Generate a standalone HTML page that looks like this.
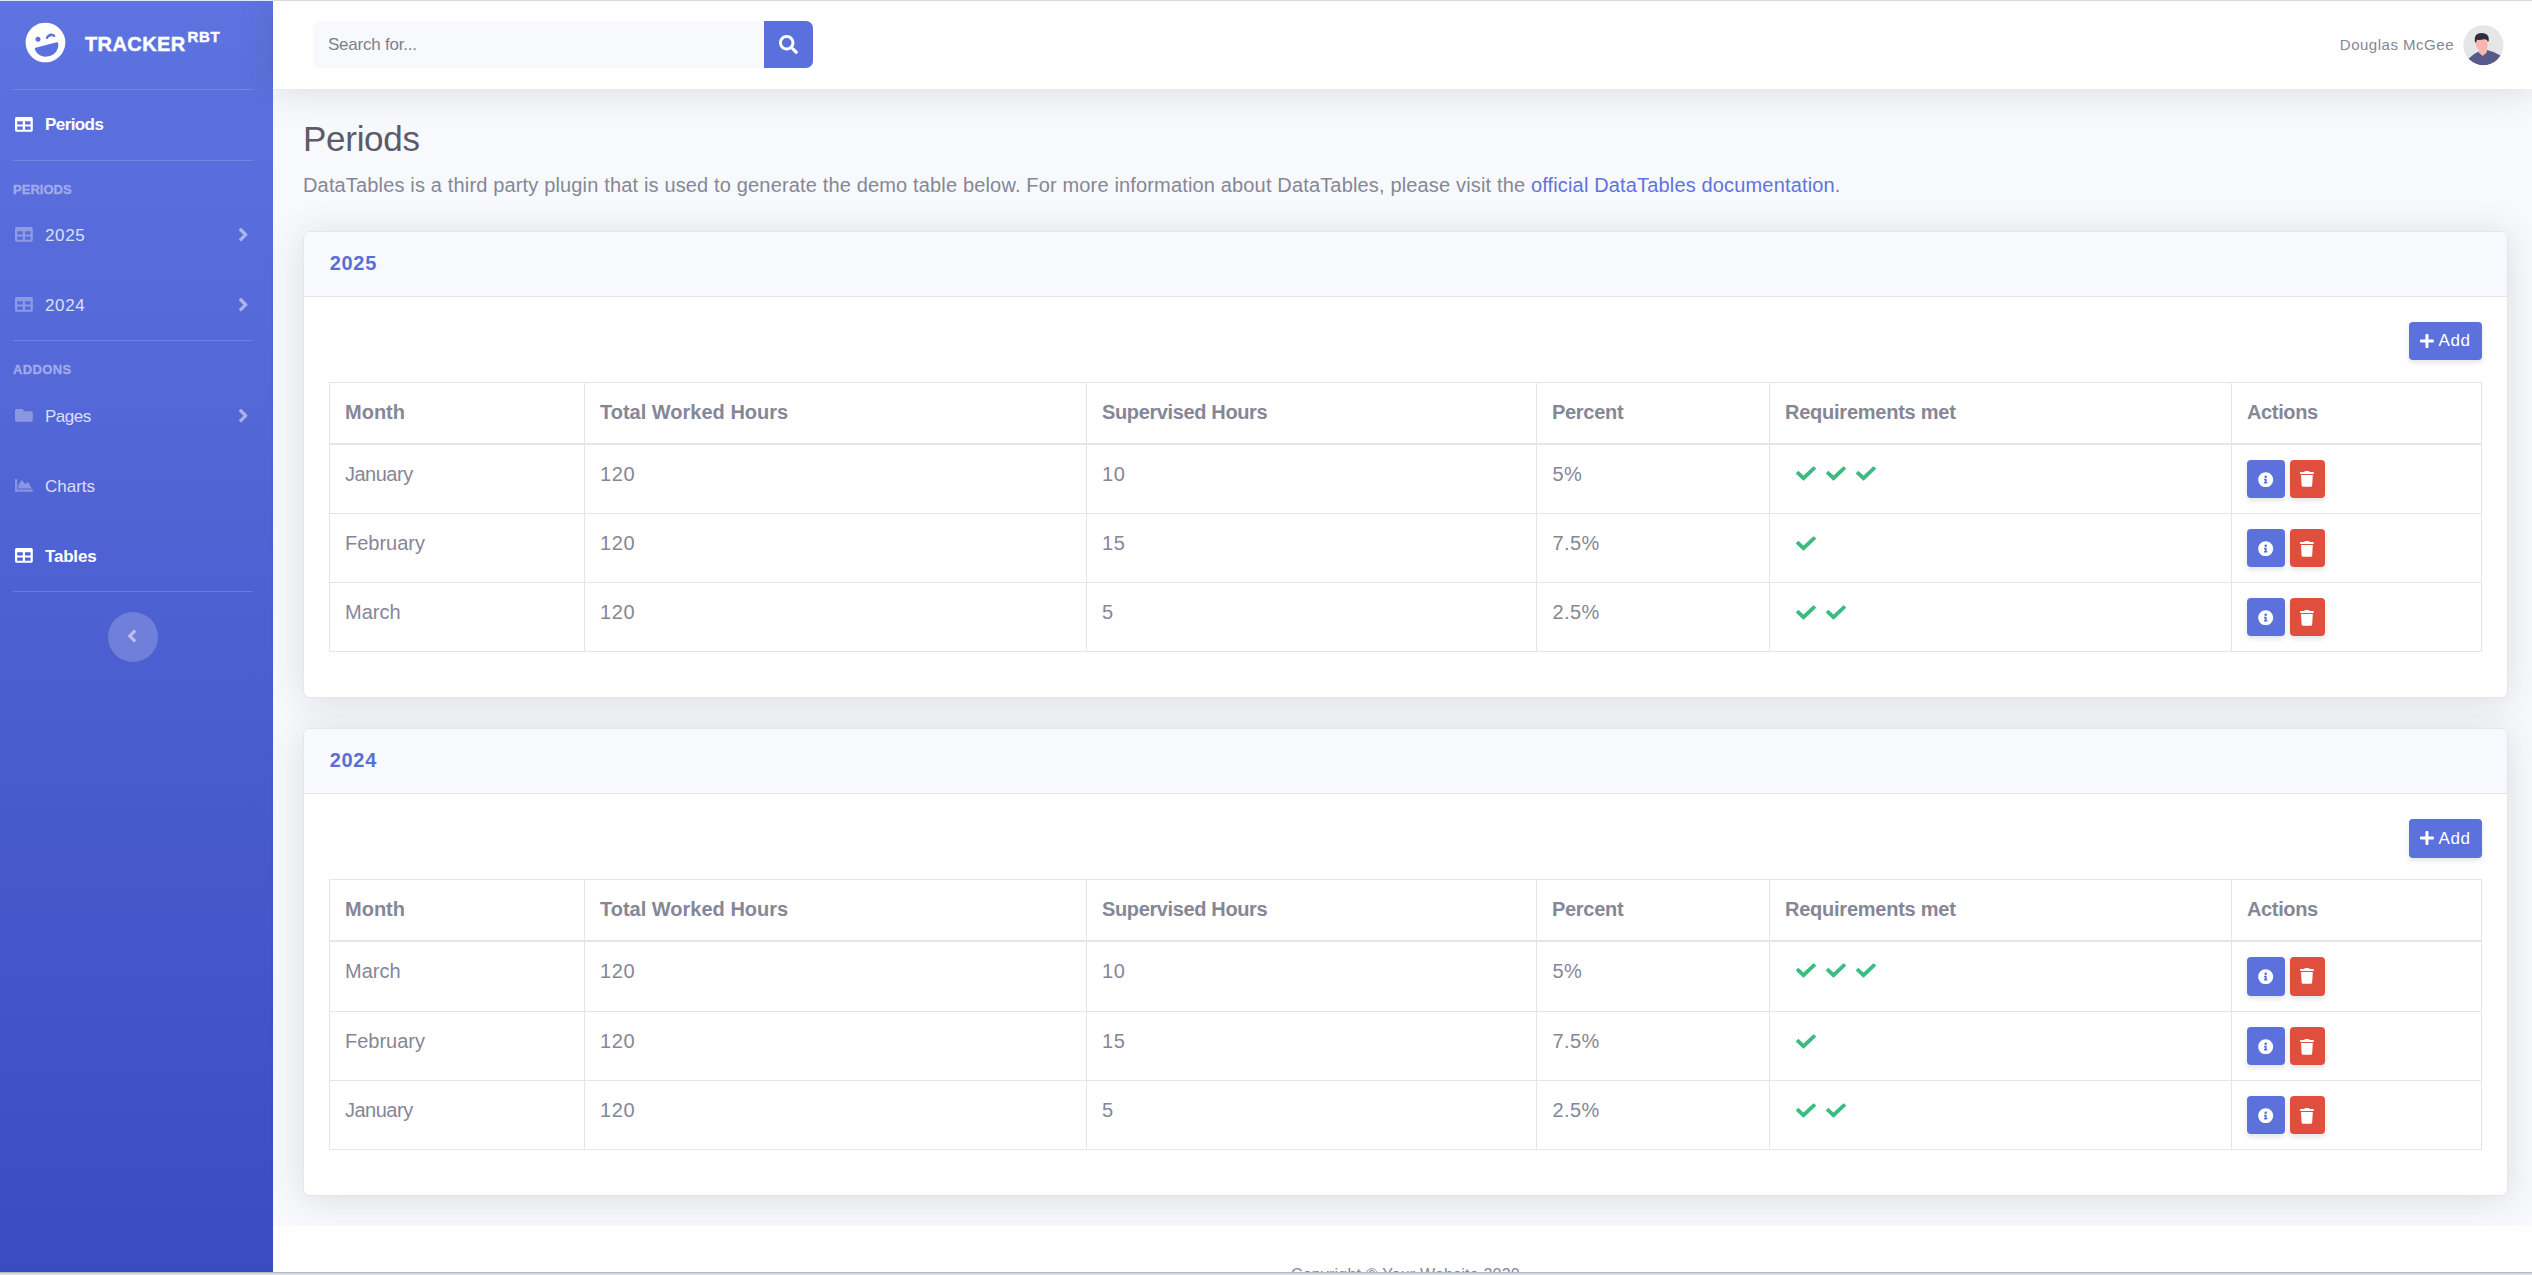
<!DOCTYPE html>
<html lang="en">
<head>
<meta charset="utf-8">
<title>Periods</title>
<style>
*{box-sizing:border-box;margin:0;padding:0}
html,body{width:2532px;height:1275px;overflow:hidden}
body{font-family:"Liberation Sans",sans-serif;background:#f8f9fc;color:#858796;position:relative;font-size:20px}
a{text-decoration:none}
#sidebar{position:absolute;left:0;top:0;width:273px;height:1275px;background:linear-gradient(180deg,#5d73df 0%,#5468d8 30%,#3a4bbf 100%)}
.brand{position:absolute;left:0;top:1px;width:273px;height:88px}
.brand svg{position:absolute;left:24.7px;top:21.2px;width:41px;height:41px;transform:rotate(-15deg)}
.brand .bt{position:absolute;left:85px;top:31px;font-size:20px;font-weight:bold;color:#fff;-webkit-text-stroke:.45px #fff;letter-spacing:0.4px;line-height:24px;white-space:nowrap}
.brand .bt sup{font-size:15px;position:relative;top:-9px;vertical-align:baseline;letter-spacing:0.6px;margin-left:2px}
.sdiv{position:absolute;left:13px;width:240px;height:1px;background:rgba(255,255,255,.17)}
.shead{position:absolute;left:13px;font-size:13px;font-weight:bold;color:#a1abeb;-webkit-text-stroke:.3px #a1abeb;letter-spacing:.03px;line-height:16px}
.sitem{position:absolute;left:0;width:273px;height:26px;color:rgba(255,255,255,.8);font-size:17px;line-height:26px}
.sitem.active{color:#fff;font-weight:bold}
.sitem svg.ic{position:absolute;left:15.1px;top:3.3px;width:17.8px;height:16.8px;fill:rgba(255,255,255,.32)}
.sitem.active svg.ic{fill:#fff}
.sitem span{position:absolute;left:45px;top:0;white-space:nowrap}
.sitem svg.ch{position:absolute;left:237.8px;top:0.9px;width:10.65px;height:21.3px;fill:rgba(255,255,255,.5)}
.toggler{position:absolute;left:108px;top:612px;width:50px;height:50px;border-radius:50%;background:rgba(255,255,255,.2)}
.toggler svg{position:absolute;left:18.6px;top:13.5px;width:10px;height:20px;fill:rgba(255,255,255,.5)}
#topbar{position:absolute;left:273px;top:1px;width:2259px;height:88px;background:#fff;box-shadow:0 3px 35px 0 rgba(58,59,69,.15)}
.search{position:absolute;left:40px;top:20px;width:451px;height:47px;background:#f8f9fc;border-radius:7px 0 0 7px;font-size:17px;line-height:47px;padding-left:15px;color:#7d7f8d;letter-spacing:-.22px}
.sbtn{position:absolute;left:491px;top:20px;width:49px;height:47px;background:#5a70dc;border-radius:0 7px 7px 0}
.sbtn svg{position:absolute;left:15px;top:13.7px;width:19px;height:19px;fill:#fff}
.uname{position:absolute;right:78px;top:32px;letter-spacing:.51px;font-size:15px;line-height:24px;color:#858796;white-space:nowrap}
.avatar{position:absolute;left:2190px;top:24px;transform:translate(.4px,.3px);width:40px;height:40px;border-radius:50%;overflow:hidden;background:#e6e6e6}
h1{position:absolute;left:303px;top:117px;letter-spacing:-.28px;font-size:35px;font-weight:normal;color:#5a5c69;line-height:44px;white-space:nowrap}
p.lead{position:absolute;left:303px;top:170px;letter-spacing:.157px;font-size:20px;line-height:30px;color:#858796;white-space:nowrap}
p.lead a{color:#5f73dc}
.card{position:absolute;left:303px;width:2205px;background:#fff;border:1px solid #e5e6ed;border-radius:7px;box-shadow:0 3px 35px 0 rgba(58,59,69,.15)}
.card .hd{position:absolute;left:0;top:0;width:2203px;height:65px;background:#f8f9fc;border-bottom:1px solid #e5e6ed;border-radius:6px 6px 0 0}
.card .hd b{position:absolute;left:25.7px;top:17.5px;font-size:20px;line-height:26px;color:#5a6fd6;letter-spacing:.72px}
.add{position:absolute;left:2105px;top:90px;width:73px;height:38px;background:#5b71dc;border-radius:4px;color:#fff;font-size:17px;line-height:38.6px;letter-spacing:.6px;box-shadow:0 2.500px 5px rgba(58,59,69,.13)}
.add svg{position:absolute;left:10.9px;top:11px;width:13.9px;height:15.9px;fill:#fff}
.add span{position:absolute;left:29.5px;top:0}
table{position:absolute;left:25px;top:150px;width:2152px;border-collapse:collapse;table-layout:fixed;font-size:20px;color:#858796}
th,td{border:1px solid #e5e6ed;text-align:left;vertical-align:top;padding:0 0 0 15px;white-space:nowrap}
th{height:61px;line-height:59px;font-weight:bold;border-bottom:2px solid #e5e6ed}
td{height:69px;line-height:58px}
td.n{letter-spacing:.57px}
td.p{letter-spacing:.4px;padding-left:15.5px}
tbody tr:first-child td{height:70px;padding-top:0}
.c2 tbody tr:first-child td{height:71px;padding-top:0}
.c2 tbody tr:first-child .btn{height:39px}
.c2 .add{height:39px;line-height:39.6px}
.btn{display:inline-block;width:38px;height:38px;border-radius:4px;vertical-align:top;margin-top:15px;position:relative;box-shadow:0 2.500px 5px rgba(58,59,69,.13)}
.bi{background:#5c71dc;margin-right:5px}
.bd{background:#e04f3e;width:35px}
.btn svg{position:absolute;fill:#fff}
.ck:first-child{margin-left:10.8px}
.ck{display:inline-block;width:20px;height:18.9px;margin:19.7px 0 0 10px;fill:#3cbb83;vertical-align:top}
#footer{position:absolute;left:273px;top:1226px;width:2259px;height:49px;background:#fff}
#footer div{position:absolute;left:0;top:39.2px;width:2259px;padding-left:5.8px;letter-spacing:.2px;text-align:center;font-size:16px;line-height:20px;color:#858796}
#topline{position:absolute;left:0;top:0;width:2532px;height:1px;background:linear-gradient(90deg,#dfe8fe 0,#dfe8fe 273px,#dbdbd9 273px)}
#botline{position:absolute;left:0;top:1272px;width:2532px;height:3px;background:#d6dce2;border-top:1px solid #b0b9c2}
</style>
</head>
<body>
<div id="sidebar">
<div class="brand"><svg viewBox="0 0 496 512"><path fill="#fff" d="M248 8C111 8 0 119 0 256s111 248 248 248 248-111 248-248S385 8 248 8zm20.100 198.100c4-25.200 34.200-42.100 59.900-42.100s55.900 16.900 59.900 42.100c1.700 11.100-11.400 18.300-19.800 10.800l-9.500-8.500c-14.800-13.200-46.200-13.200-61 0L288 217c-8.400 7.400-21.600.3-19.900-10.900zM168 160c17.700 0 32 14.300 32 32s-14.300 32-32 32-32-14.300-32-32 14.300-32 32-32zm230.900 146C390 377 329.400 432 256 432h-16c-73.400 0-134-55-142.900-126-1.200-9.500 6.300-18 15.900-18h270c9.600 0 17.100 8.400 15.900 18z"/></svg><div class="bt">TRACKER<sup>RBT</sup></div></div>
<div class="sdiv" style="top:89px"></div>
<div class="sitem active" style="top:113px"><svg class="ic" viewBox="0 0 512 512" preserveAspectRatio="none"><path d="M464 32H48C21.490 32 0 53.490 0 80v352c0 26.510 21.490 48 48 48h416c26.510 0 48-21.490 48-48V80c0-26.510-21.490-48-48-48zM224 416H64v-96h160v96zm0-160H64v-96h160v96zm224 160H288v-96h160v96zm0-160H288v-96h160v96z"/></svg><span style="font-size:17px;letter-spacing:-.58px;top:-.7px">Periods</span></div>
<div class="sdiv" style="top:160px"></div>
<div class="shead" style="top:182px">PERIODS</div>
<div class="sitem" style="top:223px"><svg class="ic" viewBox="0 0 512 512" preserveAspectRatio="none"><path d="M464 32H48C21.490 32 0 53.490 0 80v352c0 26.510 21.490 48 48 48h416c26.510 0 48-21.490 48-48V80c0-26.510-21.490-48-48-48zM224 416H64v-96h160v96zm0-160H64v-96h160v96zm224 160H288v-96h160v96zm0-160H288v-96h160v96z"/></svg><span style="letter-spacing:.65px">2025</span><svg class="ch" viewBox="0 0 256 512"><path d="M224.300 273l-136 136c-9.400 9.400-24.600 9.400-33.900 0l-22.600-22.600c-9.400-9.400-9.400-24.600 0-33.900l96.400-96.400-96.400-96.400c-9.400-9.400-9.400-24.600 0-33.900L54.300 103c9.400-9.400 24.600-9.400 33.900 0l136 136c9.500 9.400 9.500 24.600.1 34z"/></svg></div>
<div class="sitem" style="top:293px"><svg class="ic" viewBox="0 0 512 512" preserveAspectRatio="none"><path d="M464 32H48C21.490 32 0 53.490 0 80v352c0 26.510 21.490 48 48 48h416c26.510 0 48-21.490 48-48V80c0-26.510-21.490-48-48-48zM224 416H64v-96h160v96zm0-160H64v-96h160v96zm224 160H288v-96h160v96zm0-160H288v-96h160v96z"/></svg><span style="letter-spacing:.65px">2024</span><svg class="ch" viewBox="0 0 256 512"><path d="M224.300 273l-136 136c-9.400 9.400-24.600 9.400-33.900 0l-22.600-22.600c-9.400-9.400-9.400-24.600 0-33.900l96.400-96.400-96.400-96.400c-9.400-9.400-9.400-24.600 0-33.900L54.300 103c9.400-9.400 24.600-9.400 33.900 0l136 136c9.500 9.400 9.500 24.600.1 34z"/></svg></div>
<div class="sdiv" style="top:340px"></div>
<div class="shead" style="top:362px;letter-spacing:.35px">ADDONS</div>
<div class="sitem" style="top:404px"><svg class="ic" viewBox="0 0 512 512" preserveAspectRatio="none"><path d="M464 128H272l-64-64H48C21.490 64 0 85.490 0 112v288c0 26.510 21.490 48 48 48h416c26.510 0 48-21.490 48-48V176c0-26.510-21.490-48-48-48z"/></svg><span style="letter-spacing:-.5px">Pages</span><svg class="ch" viewBox="0 0 256 512"><path d="M224.300 273l-136 136c-9.400 9.400-24.600 9.400-33.900 0l-22.600-22.600c-9.400-9.400-9.400-24.600 0-33.900l96.400-96.400-96.400-96.400c-9.400-9.400-9.400-24.600 0-33.900L54.300 103c9.400-9.400 24.600-9.400 33.900 0l136 136c9.500 9.400 9.500 24.600.1 34z"/></svg></div>
<div class="sitem" style="top:474px"><svg class="ic" viewBox="0 0 512 512" preserveAspectRatio="none"><path d="M500 384c6.600 0 12 5.400 12 12v40c0 6.600-5.400 12-12 12H12c-6.600 0-12-5.400-12-12V76c0-6.600 5.400-12 12-12h40c6.600 0 12 5.400 12 12v308h436zM372.700 159.500L288 216l-85.300-113.700c-5.100-6.800-15.500-6.300-19.900 1L96 248v104h384l-89.900-187.800c-3.200-6.500-11.400-8.700-17.400-4.700z"/></svg><span>Charts</span></div>
<div class="sitem active" style="top:544px"><svg class="ic" viewBox="0 0 512 512" preserveAspectRatio="none"><path d="M464 32H48C21.490 32 0 53.490 0 80v352c0 26.510 21.490 48 48 48h416c26.510 0 48-21.490 48-48V80c0-26.510-21.490-48-48-48zM224 416H64v-96h160v96zm0-160H64v-96h160v96zm224 160H288v-96h160v96zm0-160H288v-96h160v96z"/></svg><span style="letter-spacing:-.2px">Tables</span></div>
<div class="sdiv" style="top:591px"></div>
<div class="toggler"><svg viewBox="0 0 256 512"><path d="M31.700 239l136-136c9.400-9.400 24.600-9.400 33.900 0l22.600 22.600c9.400 9.400 9.400 24.600 0 33.900L127.900 256l96.400 96.400c9.400 9.400 9.400 24.600 0 33.900L201.700 409c-9.400 9.400-24.600 9.400-33.900 0l-136-136c-9.500-9.400-9.500-24.600-.1-34z"/></svg></div>
</div>
<div id="topbar">
<div class="search">Search for...</div>
<div class="sbtn"><svg viewBox="0 0 512 512"><path d="M505 442.700L405.300 343c-4.500-4.500-10.600-7-17-7H372c27.600-35.300 44-79.700 44-128C416 93.100 322.900 0 208 0S0 93.100 0 208s93.100 208 208 208c48.300 0 92.700-16.400 128-44v16.300c0 6.400 2.500 12.500 7 17l99.700 99.700c9.400 9.400 24.600 9.400 33.900 0l28.300-28.300c9.400-9.400 9.400-24.600.1-34zM208 336c-70.700 0-128-57.200-128-128 0-70.700 57.200-128 128-128 70.700 0 128 57.200 128 128 0 70.700-57.200 128-128 128z"/></svg></div>
<div class="uname">Douglas McGee</div>
<div class="avatar"><svg viewBox="0 0 40 40" width="40" height="40"><defs><clipPath id="avc"><circle cx="20" cy="20" r="20"/></clipPath></defs><circle cx="20" cy="20" r="20" fill="#e5e6e7"/><g clip-path="url(#avc)"><path d="M5 33.500 Q9.500 28.500 15.400 26.200 L19.400 30.800 L23.600 24.800 Q31 26.300 37.500 30.500 L40 45 L0 45z" fill="#575a8b"/><path d="M12.400 18.500 Q12.400 13.500 18.500 13.500 Q24.300 13.500 24.300 19 Q24.300 22.500 23.300 24.500 L23.500 27 Q19.500 32 15.400 27.500 L15.700 24.800 Q12.400 22.500 12.400 18.500z" fill="#f9b6b0"/><path d="M11.400 16.800 Q10 7.600 18.300 7.600 Q25.600 7.600 25.400 14.300 Q25.400 16 24.600 16.600 Q24 13.800 21 14 Q16 14.800 14 14.500 Q12.600 15.800 12.700 17.500z" fill="#2f2e41"/></g></svg></div>
</div>
<h1>Periods</h1>
<p class="lead">DataTables is a third party plugin that is used to generate the demo table below. For more information about DataTables, please visit the <a>official DataTables documentation</a>.</p>
<div class="card" style="top:231px;height:467px">
<div class="hd"><b>2025</b></div>
<div class="add"><svg viewBox="0 0 448 512"><path d="M416 208H272V64c0-17.670-14.330-32-32-32h-32c-17.670 0-32 14.330-32 32v144H32c-17.670 0-32 14.330-32 32v32c0 17.670 14.330 32 32 32h144v144c0 17.670 14.330 32 32 32h32c17.670 0 32-14.330 32-32V304h144c17.670 0 32-14.330 32-32v-32c0-17.670-14.330-32-32-32z"/></svg><span>Add</span></div>
<table><colgroup><col style="width:255px"><col style="width:502px"><col style="width:450px"><col style="width:233px"><col style="width:462px"><col style="width:250px"></colgroup>
<thead><tr><th>Month</th><th>Total Worked Hours</th><th style="letter-spacing:-.37px">Supervised Hours</th><th style="letter-spacing:-.3px">Percent</th><th style="letter-spacing:-.24px">Requirements met</th><th style="letter-spacing:-.36px">Actions</th></tr></thead>
<tbody>
<tr><td style="letter-spacing:-.5px">January</td><td class="n">120</td><td class="n">10</td><td class="p">5%</td><td><svg class="ck" viewBox="0 0 512 512" preserveAspectRatio="none"><path d="M173.898 439.404l-166.400-166.400c-9.997-9.997-9.997-26.206 0-36.204l36.203-36.204c9.997-9.998 26.207-9.998 36.204 0L192 312.690 432.095 72.596c9.997-9.997 26.207-9.997 36.204 0l36.203 36.204c9.997 9.997 9.997 26.206 0 36.204l-294.400 294.401c-9.998 9.997-26.207 9.997-36.204-.001z"/></svg><svg class="ck" viewBox="0 0 512 512" preserveAspectRatio="none"><path d="M173.898 439.404l-166.400-166.400c-9.997-9.997-9.997-26.206 0-36.204l36.203-36.204c9.997-9.998 26.207-9.998 36.204 0L192 312.690 432.095 72.596c9.997-9.997 26.207-9.997 36.204 0l36.203 36.204c9.997 9.997 9.997 26.206 0 36.204l-294.400 294.401c-9.998 9.997-26.207 9.997-36.204-.001z"/></svg><svg class="ck" viewBox="0 0 512 512" preserveAspectRatio="none"><path d="M173.898 439.404l-166.400-166.400c-9.997-9.997-9.997-26.206 0-36.204l36.203-36.204c9.997-9.998 26.207-9.998 36.204 0L192 312.690 432.095 72.596c9.997-9.997 26.207-9.997 36.204 0l36.203 36.204c9.997 9.997 9.997 26.206 0 36.204l-294.400 294.401c-9.998 9.997-26.207 9.997-36.204-.001z"/></svg></td><td><span class="btn bi"><svg style="left:11.4px;top:12.1px;width:15.4px;height:15.4px" viewBox="0 0 512 512"><path d="M256 8C119.043 8 8 119.083 8 256c0 136.997 111.043 248 248 248s248-111.003 248-248C504 119.083 392.957 8 256 8zm0 110c23.196 0 42 18.804 42 42s-18.804 42-42 42-42-18.804-42-42 18.804-42 42-42zm56 254c0 6.627-5.373 12-12 12h-88c-6.627 0-12-5.373-12-12v-24c0-6.627 5.373-12 12-12h12v-64h-12c-6.627 0-12-5.373-12-12v-24c0-6.627 5.373-12 12-12h64c6.627 0 12 5.373 12 12v100h12c6.627 0 12 5.373 12 12v24z"/></svg></span><span class="btn bd"><svg style="left:10.2px;top:11.8px;width:13.8px;height:15.8px" viewBox="0 0 448 512"><path d="M432 32H312l-9.400-18.700A24 24 0 0 0 281.100 0H166.800a23.720 23.720 0 0 0-21.400 13.300L136 32H16A16 16 0 0 0 0 48v32a16 16 0 0 0 16 16h416a16 16 0 0 0 16-16V48a16 16 0 0 0-16-16zM53.200 467a48 48 0 0 0 47.900 45h245.800a48 48 0 0 0 47.900-45L416 128H32z"/></svg></span></td></tr>
<tr><td>February</td><td class="n">120</td><td class="n">15</td><td class="p">7.5%</td><td><svg class="ck" viewBox="0 0 512 512" preserveAspectRatio="none"><path d="M173.898 439.404l-166.400-166.400c-9.997-9.997-9.997-26.206 0-36.204l36.203-36.204c9.997-9.998 26.207-9.998 36.204 0L192 312.690 432.095 72.596c9.997-9.997 26.207-9.997 36.204 0l36.203 36.204c9.997 9.997 9.997 26.206 0 36.204l-294.400 294.401c-9.998 9.997-26.207 9.997-36.204-.001z"/></svg></td><td><span class="btn bi"><svg style="left:11.4px;top:12.1px;width:15.4px;height:15.4px" viewBox="0 0 512 512"><path d="M256 8C119.043 8 8 119.083 8 256c0 136.997 111.043 248 248 248s248-111.003 248-248C504 119.083 392.957 8 256 8zm0 110c23.196 0 42 18.804 42 42s-18.804 42-42 42-42-18.804-42-42 18.804-42 42-42zm56 254c0 6.627-5.373 12-12 12h-88c-6.627 0-12-5.373-12-12v-24c0-6.627 5.373-12 12-12h12v-64h-12c-6.627 0-12-5.373-12-12v-24c0-6.627 5.373-12 12-12h64c6.627 0 12 5.373 12 12v100h12c6.627 0 12 5.373 12 12v24z"/></svg></span><span class="btn bd"><svg style="left:10.2px;top:11.8px;width:13.8px;height:15.8px" viewBox="0 0 448 512"><path d="M432 32H312l-9.400-18.700A24 24 0 0 0 281.100 0H166.800a23.720 23.720 0 0 0-21.400 13.300L136 32H16A16 16 0 0 0 0 48v32a16 16 0 0 0 16 16h416a16 16 0 0 0 16-16V48a16 16 0 0 0-16-16zM53.200 467a48 48 0 0 0 47.900 45h245.800a48 48 0 0 0 47.900-45L416 128H32z"/></svg></span></td></tr>
<tr><td>March</td><td class="n">120</td><td class="n">5</td><td class="p">2.5%</td><td><svg class="ck" viewBox="0 0 512 512" preserveAspectRatio="none"><path d="M173.898 439.404l-166.400-166.400c-9.997-9.997-9.997-26.206 0-36.204l36.203-36.204c9.997-9.998 26.207-9.998 36.204 0L192 312.690 432.095 72.596c9.997-9.997 26.207-9.997 36.204 0l36.203 36.204c9.997 9.997 9.997 26.206 0 36.204l-294.400 294.401c-9.998 9.997-26.207 9.997-36.204-.001z"/></svg><svg class="ck" viewBox="0 0 512 512" preserveAspectRatio="none"><path d="M173.898 439.404l-166.400-166.400c-9.997-9.997-9.997-26.206 0-36.204l36.203-36.204c9.997-9.998 26.207-9.998 36.204 0L192 312.690 432.095 72.596c9.997-9.997 26.207-9.997 36.204 0l36.203 36.204c9.997 9.997 9.997 26.206 0 36.204l-294.400 294.401c-9.998 9.997-26.207 9.997-36.204-.001z"/></svg></td><td><span class="btn bi"><svg style="left:11.4px;top:12.1px;width:15.4px;height:15.4px" viewBox="0 0 512 512"><path d="M256 8C119.043 8 8 119.083 8 256c0 136.997 111.043 248 248 248s248-111.003 248-248C504 119.083 392.957 8 256 8zm0 110c23.196 0 42 18.804 42 42s-18.804 42-42 42-42-18.804-42-42 18.804-42 42-42zm56 254c0 6.627-5.373 12-12 12h-88c-6.627 0-12-5.373-12-12v-24c0-6.627 5.373-12 12-12h12v-64h-12c-6.627 0-12-5.373-12-12v-24c0-6.627 5.373-12 12-12h64c6.627 0 12 5.373 12 12v100h12c6.627 0 12 5.373 12 12v24z"/></svg></span><span class="btn bd"><svg style="left:10.2px;top:11.8px;width:13.8px;height:15.8px" viewBox="0 0 448 512"><path d="M432 32H312l-9.400-18.700A24 24 0 0 0 281.100 0H166.800a23.720 23.720 0 0 0-21.400 13.300L136 32H16A16 16 0 0 0 0 48v32a16 16 0 0 0 16 16h416a16 16 0 0 0 16-16V48a16 16 0 0 0-16-16zM53.200 467a48 48 0 0 0 47.900 45h245.800a48 48 0 0 0 47.900-45L416 128H32z"/></svg></span></td></tr>
</tbody></table>
</div>
<div class="card c2" style="top:728px;height:468px">
<div class="hd"><b>2024</b></div>
<div class="add"><svg viewBox="0 0 448 512"><path d="M416 208H272V64c0-17.670-14.330-32-32-32h-32c-17.670 0-32 14.330-32 32v144H32c-17.670 0-32 14.330-32 32v32c0 17.670 14.330 32 32 32h144v144c0 17.670 14.330 32 32 32h32c17.670 0 32-14.330 32-32V304h144c17.670 0 32-14.330 32-32v-32c0-17.670-14.330-32-32-32z"/></svg><span>Add</span></div>
<table><colgroup><col style="width:255px"><col style="width:502px"><col style="width:450px"><col style="width:233px"><col style="width:462px"><col style="width:250px"></colgroup>
<thead><tr><th>Month</th><th>Total Worked Hours</th><th style="letter-spacing:-.37px">Supervised Hours</th><th style="letter-spacing:-.3px">Percent</th><th style="letter-spacing:-.24px">Requirements met</th><th style="letter-spacing:-.36px">Actions</th></tr></thead>
<tbody>
<tr><td>March</td><td class="n">120</td><td class="n">10</td><td class="p">5%</td><td><svg class="ck" viewBox="0 0 512 512" preserveAspectRatio="none"><path d="M173.898 439.404l-166.400-166.400c-9.997-9.997-9.997-26.206 0-36.204l36.203-36.204c9.997-9.998 26.207-9.998 36.204 0L192 312.690 432.095 72.596c9.997-9.997 26.207-9.997 36.204 0l36.203 36.204c9.997 9.997 9.997 26.206 0 36.204l-294.400 294.401c-9.998 9.997-26.207 9.997-36.204-.001z"/></svg><svg class="ck" viewBox="0 0 512 512" preserveAspectRatio="none"><path d="M173.898 439.404l-166.400-166.400c-9.997-9.997-9.997-26.206 0-36.204l36.203-36.204c9.997-9.998 26.207-9.998 36.204 0L192 312.690 432.095 72.596c9.997-9.997 26.207-9.997 36.204 0l36.203 36.204c9.997 9.997 9.997 26.206 0 36.204l-294.400 294.401c-9.998 9.997-26.207 9.997-36.204-.001z"/></svg><svg class="ck" viewBox="0 0 512 512" preserveAspectRatio="none"><path d="M173.898 439.404l-166.400-166.400c-9.997-9.997-9.997-26.206 0-36.204l36.203-36.204c9.997-9.998 26.207-9.998 36.204 0L192 312.690 432.095 72.596c9.997-9.997 26.207-9.997 36.204 0l36.203 36.204c9.997 9.997 9.997 26.206 0 36.204l-294.400 294.401c-9.998 9.997-26.207 9.997-36.204-.001z"/></svg></td><td><span class="btn bi"><svg style="left:11.4px;top:12.1px;width:15.4px;height:15.4px" viewBox="0 0 512 512"><path d="M256 8C119.043 8 8 119.083 8 256c0 136.997 111.043 248 248 248s248-111.003 248-248C504 119.083 392.957 8 256 8zm0 110c23.196 0 42 18.804 42 42s-18.804 42-42 42-42-18.804-42-42 18.804-42 42-42zm56 254c0 6.627-5.373 12-12 12h-88c-6.627 0-12-5.373-12-12v-24c0-6.627 5.373-12 12-12h12v-64h-12c-6.627 0-12-5.373-12-12v-24c0-6.627 5.373-12 12-12h64c6.627 0 12 5.373 12 12v100h12c6.627 0 12 5.373 12 12v24z"/></svg></span><span class="btn bd"><svg style="left:10.2px;top:11.8px;width:13.8px;height:15.8px" viewBox="0 0 448 512"><path d="M432 32H312l-9.400-18.700A24 24 0 0 0 281.100 0H166.800a23.720 23.720 0 0 0-21.400 13.300L136 32H16A16 16 0 0 0 0 48v32a16 16 0 0 0 16 16h416a16 16 0 0 0 16-16V48a16 16 0 0 0-16-16zM53.200 467a48 48 0 0 0 47.900 45h245.800a48 48 0 0 0 47.900-45L416 128H32z"/></svg></span></td></tr>
<tr><td>February</td><td class="n">120</td><td class="n">15</td><td class="p">7.5%</td><td><svg class="ck" viewBox="0 0 512 512" preserveAspectRatio="none"><path d="M173.898 439.404l-166.400-166.400c-9.997-9.997-9.997-26.206 0-36.204l36.203-36.204c9.997-9.998 26.207-9.998 36.204 0L192 312.690 432.095 72.596c9.997-9.997 26.207-9.997 36.204 0l36.203 36.204c9.997 9.997 9.997 26.206 0 36.204l-294.400 294.401c-9.998 9.997-26.207 9.997-36.204-.001z"/></svg></td><td><span class="btn bi"><svg style="left:11.4px;top:12.1px;width:15.4px;height:15.4px" viewBox="0 0 512 512"><path d="M256 8C119.043 8 8 119.083 8 256c0 136.997 111.043 248 248 248s248-111.003 248-248C504 119.083 392.957 8 256 8zm0 110c23.196 0 42 18.804 42 42s-18.804 42-42 42-42-18.804-42-42 18.804-42 42-42zm56 254c0 6.627-5.373 12-12 12h-88c-6.627 0-12-5.373-12-12v-24c0-6.627 5.373-12 12-12h12v-64h-12c-6.627 0-12-5.373-12-12v-24c0-6.627 5.373-12 12-12h64c6.627 0 12 5.373 12 12v100h12c6.627 0 12 5.373 12 12v24z"/></svg></span><span class="btn bd"><svg style="left:10.2px;top:11.8px;width:13.8px;height:15.8px" viewBox="0 0 448 512"><path d="M432 32H312l-9.400-18.700A24 24 0 0 0 281.100 0H166.800a23.720 23.720 0 0 0-21.400 13.300L136 32H16A16 16 0 0 0 0 48v32a16 16 0 0 0 16 16h416a16 16 0 0 0 16-16V48a16 16 0 0 0-16-16zM53.200 467a48 48 0 0 0 47.900 45h245.800a48 48 0 0 0 47.900-45L416 128H32z"/></svg></span></td></tr>
<tr><td style="letter-spacing:-.5px">January</td><td class="n">120</td><td class="n">5</td><td class="p">2.5%</td><td><svg class="ck" viewBox="0 0 512 512" preserveAspectRatio="none"><path d="M173.898 439.404l-166.400-166.400c-9.997-9.997-9.997-26.206 0-36.204l36.203-36.204c9.997-9.998 26.207-9.998 36.204 0L192 312.690 432.095 72.596c9.997-9.997 26.207-9.997 36.204 0l36.203 36.204c9.997 9.997 9.997 26.206 0 36.204l-294.400 294.401c-9.998 9.997-26.207 9.997-36.204-.001z"/></svg><svg class="ck" viewBox="0 0 512 512" preserveAspectRatio="none"><path d="M173.898 439.404l-166.400-166.400c-9.997-9.997-9.997-26.206 0-36.204l36.203-36.204c9.997-9.998 26.207-9.998 36.204 0L192 312.690 432.095 72.596c9.997-9.997 26.207-9.997 36.204 0l36.203 36.204c9.997 9.997 9.997 26.206 0 36.204l-294.400 294.401c-9.998 9.997-26.207 9.997-36.204-.001z"/></svg></td><td><span class="btn bi"><svg style="left:11.4px;top:12.1px;width:15.4px;height:15.4px" viewBox="0 0 512 512"><path d="M256 8C119.043 8 8 119.083 8 256c0 136.997 111.043 248 248 248s248-111.003 248-248C504 119.083 392.957 8 256 8zm0 110c23.196 0 42 18.804 42 42s-18.804 42-42 42-42-18.804-42-42 18.804-42 42-42zm56 254c0 6.627-5.373 12-12 12h-88c-6.627 0-12-5.373-12-12v-24c0-6.627 5.373-12 12-12h12v-64h-12c-6.627 0-12-5.373-12-12v-24c0-6.627 5.373-12 12-12h64c6.627 0 12 5.373 12 12v100h12c6.627 0 12 5.373 12 12v24z"/></svg></span><span class="btn bd"><svg style="left:10.2px;top:11.8px;width:13.8px;height:15.8px" viewBox="0 0 448 512"><path d="M432 32H312l-9.400-18.700A24 24 0 0 0 281.100 0H166.800a23.720 23.720 0 0 0-21.400 13.300L136 32H16A16 16 0 0 0 0 48v32a16 16 0 0 0 16 16h416a16 16 0 0 0 16-16V48a16 16 0 0 0-16-16zM53.200 467a48 48 0 0 0 47.900 45h245.800a48 48 0 0 0 47.900-45L416 128H32z"/></svg></span></td></tr>
</tbody></table>
</div>
<div id="footer"><div>Copyright © Your Website 2020</div></div>
<div id="topline"></div>
<div id="botline"></div>
</body>
</html>
